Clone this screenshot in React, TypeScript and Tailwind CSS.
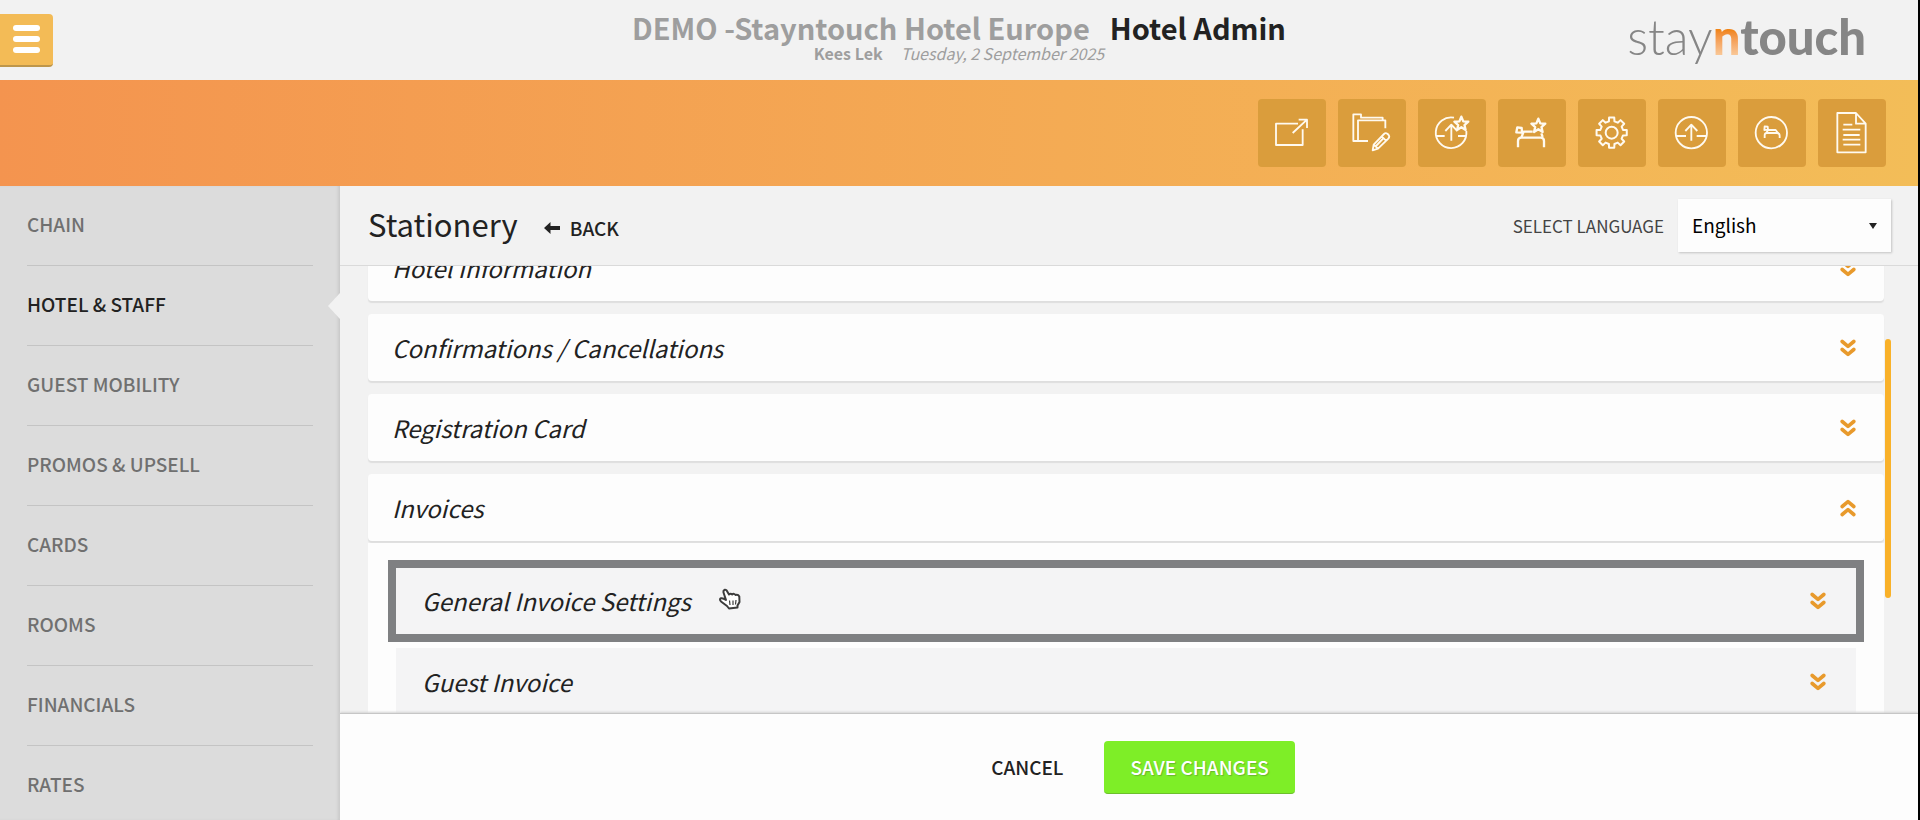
import { useState } from 'react';
import type { ReactNode } from 'react';
import { clsx } from 'clsx';

// ─── Data ─────────────────────────────────────────────────────────────────────

const NAV_ITEMS = ['Chain', 'Hotel & Staff', 'Guest Mobility', 'Promos & Upsell', 'Cards', 'Rooms', 'Financials', 'Rates'];

const INVOICE_SECTIONS = ['General Invoice Settings', 'Guest Invoice'];

// ─── Icons ────────────────────────────────────────────────────────────────────

function starPath(cx: number, cy: number, r: number) {
  const points = Array.from({ length: 10 }, (_, i) => {
    const radius = i % 2 === 0 ? r : r * 0.45;
    const angle = (Math.PI / 5) * i - Math.PI / 2;
    return `${(cx + radius * Math.cos(angle)).toFixed(1)} ${(cy + radius * Math.sin(angle)).toFixed(1)}`;
  });
  return `M${points.join('L')}Z`;
}

function gearPath(cx: number, cy: number, outer: number, inner: number) {
  const points: string[] = [];
  for (let i = 0; i < 8; i++) {
    const mid = (Math.PI / 4) * i;
    const corners = [[inner, -0.24], [outer, -0.17], [outer, 0.17], [inner, 0.24]];
    for (const [r, offset] of corners) {
      points.push(`${(cx + r * Math.cos(mid + offset)).toFixed(1)} ${(cy + r * Math.sin(mid + offset)).toFixed(1)}`);
    }
  }
  return `M${points.join('L')}Z`;
}

const UP_ARROW = 'M100 125V78M82 96L100 77L118 96';

const TOOLS: { label: string; art: ReactNode }[] = [
  {
    label: 'Open in new window',
    art: (
      <>
        <path d="M120 74H54V138H134V91" />
        <path d="M104 102L147 62M122 62H147V87" />
      </>
    ),
  },
  {
    label: 'Edit folders',
    art: (
      <>
        <path d="M60 126H46V46H69V56H134V64" />
        <path d="M90 126H60V64H142V88" />
        <path d="M104 154L107 137L138 105Q143 100 149 105L152 108Q156 113 151 119L120 149ZM107 137L120 149M131 112L144 125M114 141L138 116" />
      </>
    ),
  },
  {
    label: 'Favourite check in',
    art: (
      <>
        <path d="M108 56A46 46 0 1 0 145 96" />
        <path d="M54 111H80M120 111H145" />
        <path d={UP_ARROW} />
        <path d={starPath(130, 75, 22)} strokeWidth="7" />
      </>
    ),
  },
  {
    label: 'Favourite room',
    art: (
      <>
        <path d="M60 145V126Q60 116 70 116H128Q138 116 138 126V145" strokeWidth="7" />
        <path d="M70 116L77 98H104M130 103L134 114M55 100L58 85L71 87L72 101Z" strokeWidth="7" />
        <path d={starPath(121, 81, 22)} strokeWidth="7" />
      </>
    ),
  },
  {
    label: 'Settings',
    art: (
      <>
        <path d={gearPath(101, 101, 46, 35)} strokeWidth="6" />
        <circle cx="101" cy="101" r="18" strokeWidth="6" />
      </>
    ),
  },
  {
    label: 'Check in',
    art: (
      <>
        <circle cx="100" cy="101" r="47" />
        <path d="M54 111H84M116 111H146" />
        <path d={UP_ARROW} />
      </>
    ),
  },
  {
    label: 'Rooms',
    art: (
      <>
        <circle cx="100" cy="101" r="47" />
        <path d="M80 117V108Q80 102 87 102H117Q125 102 125 110V117" />
        <path d="M85 102L90 93H113L120 102M79 93L80 82L89 83L90 92Z" />
      </>
    ),
  },
  {
    label: 'Reports',
    art: (
      <>
        <path d="M58 42H114L143 74V160H58ZM114 42V74H143" />
        <path d="M76 77H103M74 92H127M76 108H125M74 122H127M76 137H127" />
      </>
    ),
  },
];

function DoubleChevron({ up }: { up?: boolean }) {
  return (
    <svg viewBox="0 0 16 18" className={clsx('h-[18px] w-4 flex-shrink-0', up && 'rotate-180')} fill="none" stroke="#e89a2c" strokeWidth="3.6" strokeLinecap="round" strokeLinejoin="round">
      <path d="M2.200 2.500L8 7.300L13.800 2.500M2.200 10.500L8 15.300L13.800 10.500" />
    </svg>
  );
}

function HandPointer() {
  return (
    <svg viewBox="0 0 22 22" className="h-[22px] w-[22px] flex-shrink-0" fill="#fff" stroke="#3c3c3c" strokeWidth="2" strokeLinejoin="round">
      <path d="M4.500 3Q5.500 .8 7.500 2.200L10 6.500Q11.500 5 13.200 6.500Q15 5 16.500 7Q19 6 20.300 8.500L20.500 14L18.500 17.500V19.500L10 20.500L8 18L2 13.500Q0 11 2 10.300Q4 9.800 7 12L4.500 4.500Z" />
      <path d="M10.500 12.500L11 17M14 12.500V17M17 12L16.500 16.500" strokeWidth="1.200" />
    </svg>
  );
}

// ─── Accordion ────────────────────────────────────────────────────────────────

function SectionButton({ title, open, onClick }: { title: string; open?: boolean; onClick?: () => void }) {
  return (
    <button
      type="button"
      aria-expanded={!!open}
      onClick={onClick}
      className="flex h-[67px] w-full flex-shrink-0 items-center justify-between rounded-sm bg-[#fdfdfd] pr-7 pl-6 text-left shadow-[0_2px_1px_#dedede]"
    >
      <span className="text-2xl leading-8 italic">{title}</span>
      <DoubleChevron up={open} />
    </button>
  );
}

function NestedSection({ title, active }: { title: string; active?: boolean }) {
  return (
    <button
      type="button"
      className={clsx(
        'flex items-center bg-[#f4f4f5] pr-[30px] pl-[26px] text-left',
        active ? 'box-content h-[66px] border-8 border-[#7f8082]' : 'mx-2 mt-[6px] h-[67px]',
      )}
    >
      <span className="text-2xl leading-8 italic">{title}</span>
      {active && <span className="ml-7 pb-1"><HandPointer /></span>}
      <span className="ml-auto"><DoubleChevron /></span>
    </button>
  );
}

// ─── Page ─────────────────────────────────────────────────────────────────────

export default function App() {
  const [activeNav, setActiveNav] = useState('Hotel & Staff');
  const [invoicesOpen, setInvoicesOpen] = useState(true);
  const [language, setLanguage] = useState('en');

  return (
    <div className="flex h-screen flex-col overflow-hidden border-r-2 border-black bg-[#f2f2f2] font-['Noto_Sans_CJK_SC',sans-serif] text-[#222]">
      {/* Header */}
      <header className="grid h-20 flex-shrink-0 grid-cols-[1fr_auto_1fr] items-center">
        <button type="button" aria-label="Menu" className="flex h-[53px] w-[53px] flex-col items-center justify-center gap-[5px] rounded-r-sm border-b-2 border-[#bd964b] bg-[#f3bb56]">
          <span className="h-[6px] w-[27px] rounded-full bg-white" />
          <span className="h-[6px] w-[27px] rounded-full bg-white" />
          <span className="h-[6px] w-[27px] rounded-full bg-white" />
        </button>
        <div className="pb-[6px] text-center">
          <h1 className="text-[29px] leading-8 font-bold">
            <span className="mr-5 text-[#9e9e9e]">DEMO -Stayntouch Hotel Europe</span>
            Hotel Admin
          </h1>
          <p className="text-base leading-5 text-[#9e9e9e]">
            <span className="mr-[18px] font-bold">Kees Lek</span>
            <span className="italic">Tuesday, 2 September 2025</span>
          </p>
        </div>
        <div className="justify-self-end pr-[52px] pb-2 font-[Lato,sans-serif] text-[49px] leading-none text-[#868686]">
          <span className="font-light">stay</span>
          <span className="bg-gradient-to-b from-[#f08519] from-40% to-[#f9d2a8] to-90% bg-clip-text font-black text-transparent">n</span>
          <span className="font-black">touch</span>
        </div>
      </header>

      {/* Toolbar */}
      <div className="flex h-[106px] flex-shrink-0 items-center justify-end gap-3 bg-gradient-to-r from-[#f4944f] to-[#f3bd58] pr-8">
        {TOOLS.map((t) => (
          <button key={t.label} type="button" aria-label={t.label} className="h-[68px] w-[68px] rounded bg-[#da9d3c]">
            <svg viewBox="0 0 204 204" className="h-full w-full" fill="none" stroke="#fffaf0" strokeWidth="5.500" strokeLinejoin="round">
              {t.art}
            </svg>
          </button>
        ))}
      </div>

      <div className="flex min-h-0 flex-1">
        {/* Sidebar */}
        <nav className="w-[340px] flex-shrink-0 overflow-hidden bg-[#dcdcdc] px-[27px] shadow-[inset_-3px_0_3px_-1px_#c9c9c9]">
          {NAV_ITEMS.map((item) => (
            <a
              key={item}
              href="#"
              onClick={() => setActiveNav(item)}
              className={clsx(
                'relative flex h-20 items-center border-b border-[#c4c4c4] pb-1 text-[19px] leading-6 font-medium uppercase',
                activeNav === item ? 'text-[#222]' : 'text-[#707070]',
              )}
            >
              {item}
              {activeNav === item && (
                <svg viewBox="0 0 12 26" className="absolute top-[27px] -right-[27px] h-[26px] w-3" fill="#f2f2f2">
                  <path d="M12 0V26L0 13Z" />
                </svg>
              )}
            </a>
          ))}
        </nav>

        <main className="flex min-w-0 flex-1 flex-col">
          {/* Title bar */}
          <div className="flex h-20 flex-shrink-0 items-center border-b border-[#dadada] pr-[27px] pl-7">
            <h2 className="pb-1 text-[31px] leading-10">Stationery</h2>
            <button type="button" className="ml-[26px] flex items-center gap-[10px] pt-1 text-[19px] leading-6 font-medium">
              <svg viewBox="0 0 16 12" className="h-3 w-4" fill="#222">
                <path d="M0 6L6.500 0V4H16V8H6.500V12Z" />
              </svg>
              BACK
            </button>
            <label htmlFor="language" className="mr-[14px] ml-auto text-[17px] leading-6 text-[#444]">SELECT LANGUAGE</label>
            <div className="relative">
              <select
                id="language"
                value={language}
                onChange={(e) => setLanguage(e.target.value)}
                className="h-[53px] w-[213px] appearance-none bg-[#fdfdfd] px-[14px] text-[19px] text-black shadow-[1px_1px_2px_#c4c4c4]"
              >
                <option value="en">English</option>
              </select>
              <svg viewBox="0 0 8 6" className="pointer-events-none absolute top-6 right-[14px] h-[6px] w-2" fill="#222">
                <path d="M0 0H8L4 6Z" />
              </svg>
            </div>
          </div>

          {/* Sections */}
          <div className="flex min-h-0 flex-1 overflow-hidden pr-[27px] pl-7">
            <div className="-mt-8 flex flex-1 flex-col gap-[13px]">
              <SectionButton title="Hotel Information" />
              <SectionButton title="Confirmations / Cancellations" />
              <SectionButton title="Registration Card" />
              <div className="flex-shrink-0">
                <SectionButton title="Invoices" open={invoicesOpen} onClick={() => setInvoicesOpen((v) => !v)} />
                {invoicesOpen && (
                  <div className="mt-[2px] flex flex-col bg-[#fdfdfd] px-5 pt-[17px] pb-5">
                    {INVOICE_SECTIONS.map((title, i) => (
                      <NestedSection key={title} title={title} active={i === 0} />
                    ))}
                  </div>
                )}
              </div>
            </div>
            <div className="mt-[73px] ml-px h-[259px] w-[6px] rounded-full bg-[#f9b129]" />
          </div>

          {/* Actions */}
          <footer className="z-10 flex h-[107px] flex-shrink-0 items-center justify-center gap-[13px] border-t border-[#c6c6c6] bg-[#fdfdfd] shadow-[0_-1px_2px_#d4d4d4]">
            <button type="button" className="h-[53px] px-7 text-[19px] leading-6 font-medium">CANCEL</button>
            <button type="button" className="h-[53px] rounded border-b border-[#6cbf2c] bg-[#7eee27] px-[26px] text-[19px] leading-6 font-medium text-white [text-shadow:1px_1px_1px_#67b82b]">
              SAVE CHANGES
            </button>
          </footer>
        </main>
      </div>
    </div>
  );
}
